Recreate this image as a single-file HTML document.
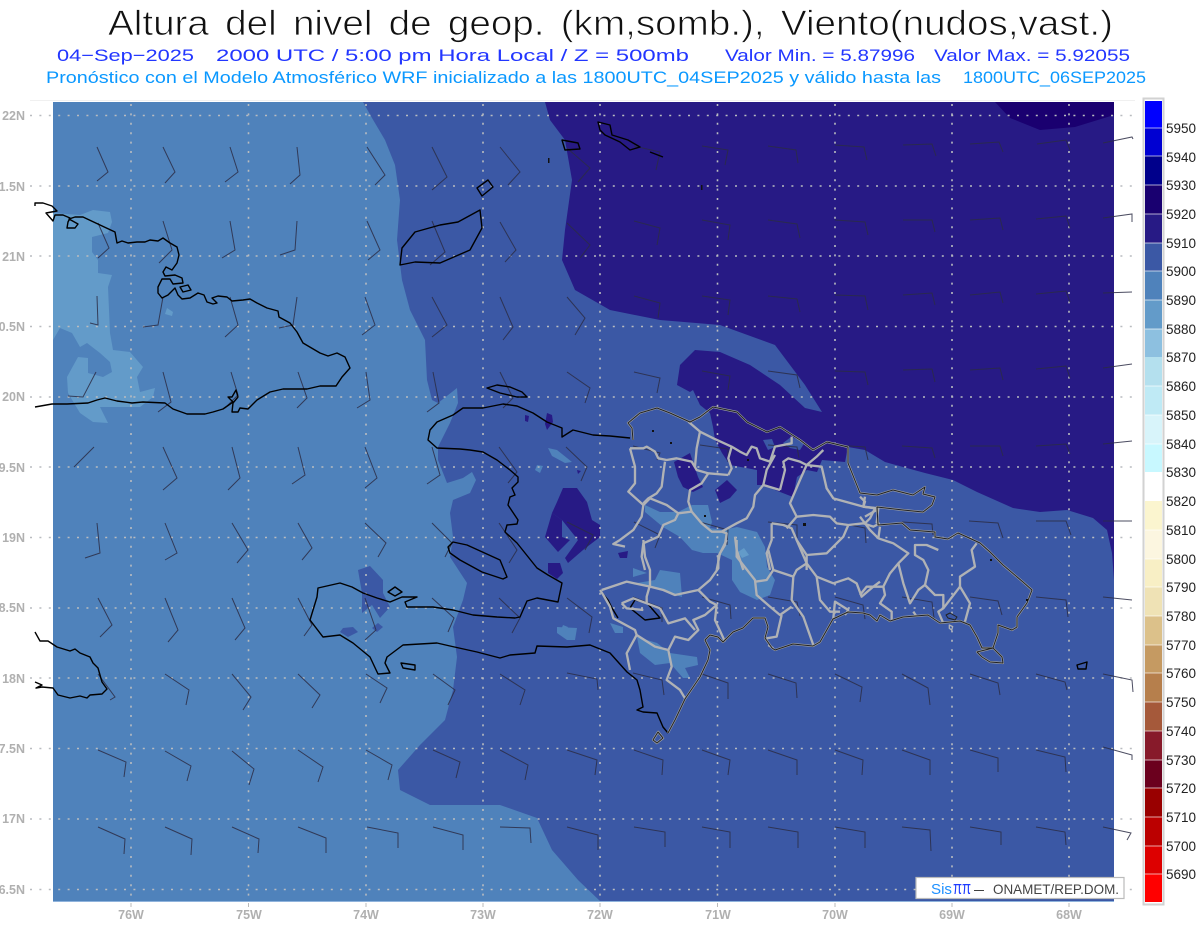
<!DOCTYPE html>
<html><head><meta charset="utf-8"><title>Altura del nivel de geop.</title>
<style>
html,body{margin:0;padding:0;background:#fff;width:1200px;height:927px;overflow:hidden}
svg{display:block;font-family:"Liberation Sans",sans-serif}
</style></head><body>
<svg width="1200" height="927" viewBox="0 0 1200 927" xmlns="http://www.w3.org/2000/svg">
<rect width="1200" height="927" fill="#fff"/>
<text x="108" y="35" font-size="35" fill="#111" stroke="#fff" stroke-width=".8" word-spacing="5" textLength="1005" lengthAdjust="spacingAndGlyphs">Altura del nivel de geop. (km,somb.), Viento(nudos,vast.)</text>
<g font-size="17" fill="#2236ff">
<text x="57" y="61" textLength="137" lengthAdjust="spacingAndGlyphs">04−Sep−2025</text>
<text x="216" y="61" textLength="473" lengthAdjust="spacingAndGlyphs">2000 UTC / 5:00 pm Hora Local / Z = 500mb</text>
<text x="725" y="61" textLength="190" lengthAdjust="spacingAndGlyphs">Valor Min. = 5.87996</text>
<text x="934" y="61" textLength="196" lengthAdjust="spacingAndGlyphs">Valor Max. = 5.92055</text>
</g>
<g font-size="17" fill="#0a98ff">
<text x="46" y="83" textLength="895" lengthAdjust="spacingAndGlyphs">Pronóstico con el Modelo Atmosférico WRF inicializado a las 1800UTC_04SEP2025 y válido hasta las</text>
<text x="963" y="83" textLength="183" lengthAdjust="spacingAndGlyphs">1800UTC_06SEP2025</text>
</g>
<line x1="30" y1="100.5" x2="1135" y2="100.5" stroke="#f0f0f0"/>
<clipPath id="m"><rect x="53" y="102" width="1061" height="799"/></clipPath>
<g clip-path="url(#m)">
<rect x="53" y="102" width="1061" height="799" fill="#4f82bb"/>
<path fill="#639bc9" d="M53 213L80 215 93 210 110 212 112 222 108 233 92 237 92 252 98 260 98 273 112 275 108 287 110 333 113 350 130 352 143 367 137 377 140 392 155 388 153 397 140 407 120 407 100 407 108 423 93 422 80 413 68 393 67 377 78 357 88 358 88 373 103 377 112 372 110 362 100 353 87 343 80 347 72 333 60 328 53 340Z"/>
<path fill="#639bc9" d="M167 308L173 312 172 316 165 314Z"/>
<path fill="#3b58a5" d="M363 102L372 118 385 140 395 165 400 200 397 240 402 280 410 310 425 340 427 380 432 400 438 403 457 388 458 403 450 423 438 447 438 460 447 483 463 478 472 472 476 480 470 493 453 500 450 513 453 537 450 557 467 583 463 600 453 627 457 657 453 690 445 720 420 745 398 770 400 790 430 805 500 805 537 818 552 850 578 880 600 901 1114 901 1114 102Z"/>
<g fill="#3b58a5">
<path d="M358 570L370 566 383 580 383 593 390 607 380 618 372 605 362 613 362 593Z"/>
<path d="M343 628L353 627 358 632 348 637 340 632Z"/>
<path d="M378 623L383 627 377 632 372 628Z"/>
</g>
<g fill="#4f82bb">
<path d="M548 448L557 450 572 462 565 463 552 456Z"/>
<path d="M557 627L577 628 575 640 567 640 557 633Z"/>
<path d="M537 465L543 466 540 473 535 470Z"/>
<path d="M563 625L568 627 565 632 561 630Z"/>
<path d="M645 505L660 512 678 512 692 505 708 505 712 522 710 528 723 530 737 527 757 532 765 547 767 567 775 580 770 595 757 600 740 592 732 580 732 560 717 553 703 553 692 550 680 537 663 527 645 512Z"/>
<path d="M660 570L680 573 682 597 660 590 637 583 655 580Z"/>
<path d="M633 568L647 573 633 577Z"/>
<path d="M637 637L657 643 670 653 697 657 698 665 685 668 690 678 683 678 670 663 655 665 640 653Z"/>
<path d="M610 623L623 627 623 633 615 633Z"/>
</g>
<path fill="#639bc9" d="M738 552L744 548 749 555 742 558Z"/>
<path fill="#271a85" d="M545 102L550 120 565 140 572 180 565 230 562 260 575 290 610 310 660 320 720 325 775 345 805 385 822 412 805 408 780 385 750 365 720 352 695 350 680 365 677 385 690 392 693 390 700 405 710 413 713 427 715 440 722 453 730 465 757 470 757 485 767 485 775 490 793 497 797 477 807 470 817 472 822 460 845 462 848 447 865 450 885 462 925 473 953 480 977 492 1013 508 1040 512 1067 510 1093 518 1107 530 1112 553 1114 580 1114 102Z"/>
<g fill="#3b58a5">
<path d="M763 440L772 439 775 447 768 450Z"/>
<path d="M783 443L791 437 805 442 800 450 790 448Z"/>
</g>
<path fill="#1a0070" d="M995 102L1010 118 1040 130 1075 127 1114 115 1114 102Z"/>
<g fill="#271a85">
<path d="M674 462L690 453 698 477 703 487 693 492 683 487 678 477Z"/>
<path d="M715 490L727 480 737 490 730 498 720 503Z"/>
<path d="M557 502L563 488 577 488 587 502 592 520 600 525 600 537 583 550 568 563 565 558 578 540 570 530 562 520 552 513Z"/>
<path d="M552 513L562 520 562 537 570 540 558 552 545 537 547 530Z"/>
<path d="M548 563L560 563 563 573 557 579 548 573Z"/>
<path d="M547 413L552 415 553 422 547 430 545 424Z"/>
<path d="M525 415L529 416 528 422 525 421Z"/>
<path d="M577 470L581 471 578 474Z"/>
<path d="M618 553L628 551 627 558 620 558Z"/>
</g>
</g>
<g fill="none" stroke="#b9bcc0" stroke-width="1.6" stroke-dasharray="2 7.4">
<path d="M30 115.5H1134M30 186H1134M30 256H1134M30 326.5H1134M30 397H1134M30 467H1134M30 537.5H1134M30 608H1134M30 678H1134M30 748.5H1134M30 819H1134M30 889.5H1134"/>
<path d="M131 104V897M248.5 104V897M366 104V897M483 104V897M600 104V897M717.5 104V897M835 104V897M952 104V897M1069 104V897"/>
</g>
<path d="M131 903v4M248.5 903v4M366 903v4M483 903v4M600 903v4M717.5 903v4M835 903v4M952 903v4M1069 903v4" stroke="#bbb"/>
<line x1="53" y1="901.5" x2="1114" y2="901.5" stroke="#8fb3dc"/>
<path fill="none" stroke="#2b2d45" stroke-opacity=".85" stroke-width="1" d="M97 147L108 172 97 181M163 147L175 172 165 183M230 147L238 172 225 182M297 147L300 175 290 184M367 147L385 175 375 185M432 147L447 177 432 190M500 147L520 172 508 185M567 148L590 168 578 182M634 146L660 152 656 170M702 146L728 150 725 165M768 146L796 150 798 163M835 145L864 147 867 160M903 145L932 144 936 156M970 144L999 142 1003 152M1037 144L1066 140 1070 150M1103 143L1132 137 1133 139
M98 223L109 248 98 258M163 221L172 250 159 263M230 221L235 250 222 258M297 221L295 250 280 255M367 221L380 250 368 260M432 221L445 252 430 265M500 222L516 250 505 262M567 223L590 245 580 258M634 221L660 228 657 245M702 220L730 225 728 240M768 220L797 224 800 238M835 220L865 222 868 235M903 220L932 220 935 232M970 220L1000 218 1003 230M1036 219L1066 216 1070 228M1103 218L1132 214 1132 222
M97 296L98 325 90 323M163 297L158 325 143 327M230 297L238 325 225 337M297 297L293 325 279 328M365 297L375 325 362 335M432 297L447 325 432 337M500 297L513 327 503 340M567 297L585 318 575 335M634 296L660 303 658 318M702 296L730 300 728 315M768 296L797 299 800 312M835 295L865 296 868 310M903 295L932 293 935 305M970 295L1000 292 1003 303M1036 294L1066 291 1070 302M1103 293L1132 292
M96 372L83 397 68 396M163 372L171 402 158 412M231 372L238 395 225 408M298 372L307 398 297 408M366 372L370 400 357 408M433 372L439 403 427 412M500 372L513 398 503 408M567 372L590 388 585 403M634 372L660 378 657 393M702 371L730 376 728 390M768 371L797 375 800 388M835 371L865 372 868 385M903 370L932 369 935 382M970 370L1000 368 1003 380M1036 369L1066 366 1070 378M1103 368L1132 364
M94 447L74 467M163 447L177 478 163 490M232 447L240 478 228 490M298 447L305 475 292 484M365 447L377 478 365 488M432 447L440 475 427 484M499 447L517 472 508 483M566 447L587 467 581 481M633 446L660 453 657 460M700 445L728 449 728 462M768 445L797 447 799 458M835 445L865 447 868 460M902 446L932 448 935 458M970 446L1000 446 1003 456M1036 446L1066 444 1070 454M1103 444L1132 441
M97 523L100 553 85 558M165 523L177 553 165 560M232 523L248 550 237 563M298 523L312 548 302 560M365 523L386 543 378 557M432 523L452 543 445 557M499 523L517 550 509 563M567 522L593 535 585 550M634 522L660 535 655 548M700 522L728 530 727 545M768 522L797 525 797 538M835 522L865 528 866 543M902 522L932 524 933 535M969 521L998 523 1003 538M1036 521L1066 521 1071 535M1103 521L1132 521
M98 598L112 625 100 637M165 598L178 630 168 642M232 598L245 628 235 640M298 598L312 625 304 636M365 598L376 630 365 640M432 598L454 618 448 632M499 598L520 618 512 633M567 598L592 617 589 633M633 597L662 608 662 622M702 597L730 605 731 619M768 597L797 602 800 616M835 597L863 605 865 619M902 597L932 602 934 618M970 597L998 601 1002 615M1036 597L1066 600 1068 617M1103 597L1132 600
M98 674L115 697 110 700M165 674L189 690 186 705M232 674L251 697 243 710M298 674L320 695 312 708M366 674L387 688 380 703M433 674L455 690 448 705M500 674L525 690 520 705M567 673L597 679 598 690M633 673L662 680 664 695M702 674L728 683 728 699M768 674L796 683 797 698M835 674L862 687 860 702M902 674L928 688 930 705M970 674L998 683 1000 695M1036 674L1065 682 1067 690M1103 674L1132 680 1133 692
M98 750L126 762 124 777M165 751L191 766 187 781M232 751L254 769 249 785M298 750L323 767 318 782M366 750L392 765 388 780M433 750L460 762 456 778M500 750L528 765 525 780M567 750L597 760 595 775M634 750L663 760 662 775M702 750L730 760 728 775M768 750L797 760 797 775M835 750L863 760 862 775M902 750L930 760 930 775M970 750L998 758 998 772M1036 750L1065 757 1066 772M1103 747L1132 755 1132 760
M98 827L125 839 124 854M165 827L192 839 191 855M232 827L259 839 258 853M298 827L326 838 326 853M367 827L398 833 398 848M433 827L463 835 463 850M500 827L530 828 531 843M567 827L598 835 598 850M634 827L665 832 665 847M702 827L730 832 730 848M768 827L798 832 798 848M835 827L865 832 865 848M902 827L930 830 931 851M970 827L1001 832 1001 845M1036 827L1065 832 1066 845M1103 827L1131 833 1127 840"/>
<g fill="none" stroke="#000" stroke-width="1.4" stroke-linejoin="round">
<path d="M35 206L35 203 43 203 52 206 57 211 46 213 53 221 55 215 63 215 70 218 68 222 67 228 75 228 78 224 69 219 75 217 83 217 100 225 115 232 117 243 122 241 128 243 137 242 145 242 150 240 158 241 163 238 170 243 177 247 179 255 177 263 172 270 166 267 163 272 165 276 175 275 182 278 183 283 173 284 170 279 162 279 158 287 158 293 162 298 168 295 175 288 178 295 182 299 190 298 198 293 204 295 207 302 213 304 217 303 212 298 218 296 227 297 232 301 243 300 250 299 257 303 267 308 278 311 279 317 290 323 297 332 303 343 320 353 328 356 337 353 345 357 350 368 342 377 336 386 320 386 307 389 283 389 270 392 257 400 248 409 240 408 238 412 232 412 233 403 238 397 236 390 232 397 228 397 233 402 223 409 213 412 205 414 187 414 173 409 165 403 143 402 132 403 117 401 105 398 97 400 88 403 67 404 52 404 35 407"/>
<path d="M180 287L188 285 191 290 183 292Z"/>
<path d="M35 632L40 641 48 641 57 647 70 651 75 649 80 653 90 657 93 663 98 668 102 682 107 689 102 694 90 695 87 698 80 696 70 698 58 695 53 688 42 687 36 688 42 685 35 682"/>
<path d="M402 248L415 232 440 225 458 222 480 210 482 228 470 250 440 263 415 262 400 265Z"/>
<path d="M477 188L488 180 493 187 482 196Z"/>
<path d="M598 122L610 125 612 135 628 140 640 147 630 150 620 142 605 135 600 130Z"/>
<path d="M562 140L578 143 580 149 565 150Z"/>
<path d="M650 152L663 157"/>
<path d="M487 388L497 385 510 387 522 392 527 397 517 397 500 393Z"/>
<path d="M630 438L610 436 593 435 573 430 562 437 562 428 547 422 533 413 517 406 503 404 483 408 463 408 453 415 437 422 430 430 428 440 437 448 460 449 470 450 483 452 497 460 510 470 518 477 518 482 512 488 515 495 510 497 508 505 518 520 517 524 507 525 505 532 517 543 537 568 548 575 562 583 558 602 537 598 527 601 520 617 515 618 497 617 473 615 453 610 433 607 407 607 405 602 417 597 402 597 390 602 377 598 363 593 352 587 340 583 318 588 317 597 310 620 323 637 340 635 353 643 370 657 378 674 390 673 385 663 387 657 403 645 437 643 450 646 477 652 500 658 510 655 535 653 537 646 567 647 590 645 610 653 627 672 637 680 640 690 643 707 637 710 643 712 657 713 663 727 668 733"/>
<path d="M448 547L453 542 467 545 500 560 507 577 503 579 482 572 460 560 450 553Z"/>
<path d="M401 663L415 665 415 670 403 668Z"/>
<path d="M388 592L395 587 402 592 395 596Z"/>
<path d="M1077 665L1087 662 1086 669 1078 669Z"/>
<path d="M600 590L608 600 612 608 618 618"/>
<path d="M630 608L635 600 647 603 660 618 645 620Z"/>
</g>
<g fill="none" stroke="#b0b2b5" stroke-width="7" stroke-linejoin="round" transform="translate(600 390) scale(.3333)">
<path d="M90 175L130 175 140 170 165 185 175 205 200 210 230 205 275 215 290 240 325 250 385 255"/>
<path d="M300 125L290 175 285 230"/>
<path d="M265 95L300 125 340 145 395 170 420 185 440 195 455 170 470 175 480 205 510 215 525 170 575 160 575 140"/>
<path d="M395 170L385 205 395 235 385 255"/>
<path d="M325 250L305 280 270 300 265 335 275 365 305 400 335 425 365 425"/>
<path d="M195 215L190 250 185 290 170 310 145 325 130 340"/>
<path d="M90 175L105 230 105 280 85 305 130 345 125 380 100 420 60 450 40 462 75 470"/>
<path d="M130 345L150 325 200 345 235 370 275 365"/>
<path d="M235 370L225 390 190 405 175 440 130 460 125 500 135 540"/>
<path d="M365 425L410 400 440 385 460 350 465 315 490 285 540 300"/>
<path d="M525 195L500 240 490 285"/>
<path d="M540 300L555 240 550 215 565 205 600 215 620 225 650 200 670 180"/>
<path d="M620 225L600 270 570 340 590 380 560 415"/>
<path d="M620 225L665 230 680 295 700 325 790 350 835 355 830 400"/>
<path d="M790 350L795 320"/>
<path d="M795 380L830 360"/>
<path d="M590 380L640 375 690 380 710 400 745 405 790 400 820 410 840 400"/>
<path d="M515 400L550 405 575 415 590 450 620 495 620 540"/>
<path d="M515 400L515 450 500 490 510 540"/>
<path d="M745 405L730 440 680 490 620 495"/>
<path d="M365 425L380 430 375 465 360 490 350 540"/>
<path d="M405 440L410 480 430 540"/>
</g>
<g fill="none" stroke="#b0b2b5" stroke-width="7" stroke-linejoin="round" transform="translate(600 540) scale(.3333)">
<path d="M380 0L355 50 355 85 330 120 295 150 225 165 190 150 150 140 80 125 5 150"/>
<path d="M130 0L135 50 150 90 150 135 140 170 140 190"/>
<path d="M410 0L410 50 465 120 470 165 510 200 540 225 575 200"/>
<path d="M505 30L520 90 580 110 590 90 620 70"/>
<path d="M620 70L590 0"/>
<path d="M620 70L650 110 700 130 745 115 770 130 785 170 820 140 840 125"/>
<path d="M580 110L575 180 610 230 640 315"/>
<path d="M650 110L660 180 690 215 720 215"/>
<path d="M520 90L500 120 465 125"/>
<path d="M295 150L330 185 350 195 345 240 375 305"/>
<path d="M350 195L315 225 280 240 295 270 265 300 225 290 205 330 215 380 200 420 240 450 255 475"/>
<path d="M205 330L165 320 110 285 80 340 90 390"/>
<path d="M110 285L105 270 40 235 30 200 10 165 0 150"/>
<path d="M180 205L205 250 255 235 285 270"/>
<path d="M65 190L100 175 140 190 180 205"/>
<path d="M65 190L80 205 130 210"/>
<path d="M545 225L530 290 500 295"/>
<path d="M700 235L705 185 745 210 735 225"/>
<path d="M505 315L520 325"/>
<path d="M160 600L175 575 190 595 170 610Z" stroke-width="5"/>
</g>
<g fill="none" stroke="#b0b2b5" stroke-width="7" stroke-linejoin="round" transform="translate(860 480) scale(.3333)">
<path d="M0 50L15 65 10 80 45 85 30 115 15 130 30 150 55 175 100 190 145 220 115 250 90 280 70 320 20 320 0 345"/>
<path d="M70 320L75 345 60 370 95 395 95 420"/>
<path d="M115 250L130 310 150 370 175 330 195 315 205 270 190 240 165 225 165 195 200 195 235 210"/>
<path d="M195 315L225 345 250 345 250 385 235 395 250 430"/>
<path d="M250 385L300 320 330 370 315 425"/>
<path d="M300 320L300 290 345 260 335 210 350 190"/>
<path d="M0 110L15 130"/>
<path d="M60 140L55 175"/>
<path d="M160 395L170 410"/>
<path d="M268 435L278 440 275 450 268 445Z" stroke-width="4"/>
</g>
<g fill="none" stroke="#9ea2a8" stroke-width="2.2" stroke-linejoin="round">
<path d="M668 733L675 720 685 699 700 677 708 660 710 650 705 640 710 635 718 637 723 642 733 632 743 628 753 618 765 618 768 627 765 638 772 648 775 650 793 644 813 646 820 642 833 619 848 612 863 613 870 615 877 621 880 615 890 621 903 617 928 615 940 623 960 621 970 625 977 637 982 648 993 648 998 633 998 625 1012 630 1017 627 1017 617 1027 603 1032 590 1023 582 1003 565 990 552 980 543 967 537 958 533 948 539 935 537 935 532 910 530 902 523 878 525 877 507 903 510 923 512 932 505 935 497 923 494 925 487 913 495 893 490 877 495 860 493 848 463 848 447 827 442 813 450 800 440 780 427 767 432 747 422 737 412 713 407 700 417 690 422 670 413 657 408 640 413 628 423 632 428 633 440"/>
<path d="M977 652L993 648 1002 657 1003 663 990 662 982 657Z"/>
<path d="M653 740L658 732 663 738 657 743Z"/>
</g>
<g fill="none" stroke="#222" stroke-width="1" stroke-linejoin="round">
<path d="M668 733L675 720 685 699 700 677 708 660 710 650 705 640 710 635 718 637 723 642 733 632 743 628 753 618 765 618 768 627 765 638 772 648 775 650 793 644 813 646 820 642 833 619 848 612 863 613 870 615 877 621 880 615 890 621 903 617 928 615 940 623 960 621 970 625 977 637 982 648 993 648 998 633 998 625 1012 630 1017 627 1017 617 1027 603 1032 590 1023 582 1003 565 990 552 980 543 967 537 958 533 948 539 935 537 935 532 910 530 902 523 878 525 877 507 903 510 923 512 932 505 935 497 923 494 925 487 913 495 893 490 877 495 860 493 848 463 848 447 827 442 813 450 800 440 780 427 767 432 747 422 737 412 713 407 700 417 690 422 670 413 657 408 640 413 628 423 632 428 633 440"/>
<path d="M977 652L993 648 1002 657 1003 663 990 662 982 657Z"/>
<path d="M653 740L658 732 663 738 657 743Z"/>
<path d="M946 615L950 613 957 617 955 620 948 618Z"/>
</g>
<g fill="#111">
<rect x="990" y="559" width="2" height="2"/><rect x="1026" y="599" width="2" height="2"/><rect x="652" y="430" width="2" height="2"/><rect x="670" y="442" width="2" height="2"/><rect x="747" y="459" width="2" height="2"/><rect x="803" y="523" width="3" height="3"/><rect x="704" y="515" width="2" height="2"/><rect x="548" y="158" width="1.5" height="5"/><rect x="701" y="185" width="1.5" height="5"/>
</g>
<g font-size="12.5" font-weight="bold" fill="#b0b0b0" text-anchor="end">
<text x="25" y="120">22N</text><text x="25" y="191">1.5N</text><text x="25" y="261">21N</text><text x="25" y="331">0.5N</text><text x="25" y="401">20N</text><text x="25" y="472">9.5N</text><text x="25" y="542">19N</text><text x="25" y="612">8.5N</text><text x="25" y="683">18N</text><text x="25" y="753">7.5N</text><text x="25" y="823">17N</text><text x="25" y="894">6.5N</text>
</g>
<g font-size="12.5" font-weight="bold" fill="#b0b0b0" text-anchor="middle">
<text x="131" y="919">76W</text><text x="249" y="919">75W</text><text x="366" y="919">74W</text><text x="483" y="919">73W</text><text x="600" y="919">72W</text><text x="718" y="919">71W</text><text x="835" y="919">70W</text><text x="952" y="919">69W</text><text x="1069" y="919">68W</text>
</g>
<rect x="1143.5" y="98.5" width="20" height="806" fill="#fff" stroke="#d2d2d2" stroke-width="2"/>
<rect x="1145" y="101" width="17" height="27" fill="#0000ff"/>
<rect x="1145" y="128" width="17" height="28" fill="#0000d2"/>
<rect x="1145" y="156" width="17" height="29" fill="#00008b"/>
<rect x="1145" y="185" width="17" height="29" fill="#190070"/>
<rect x="1145" y="214" width="17" height="29" fill="#271a85"/>
<rect x="1145" y="243" width="17" height="28" fill="#3b58a5"/>
<rect x="1145" y="271" width="17" height="29" fill="#4f82bb"/>
<rect x="1145" y="300" width="17" height="29" fill="#639bc9"/>
<rect x="1145" y="329" width="17" height="28" fill="#8dc0e0"/>
<rect x="1145" y="357" width="17" height="29" fill="#b4e0ee"/>
<rect x="1145" y="386" width="17" height="29" fill="#bfeaf5"/>
<rect x="1145" y="415" width="17" height="29" fill="#d8f4fa"/>
<rect x="1145" y="444" width="17" height="28" fill="#c8f8ff"/>
<rect x="1145" y="472" width="17" height="29" fill="#ffffff"/>
<rect x="1145" y="501" width="17" height="29" fill="#fbf5cf"/>
<rect x="1145" y="530" width="17" height="29" fill="#fcf6e0"/>
<rect x="1145" y="559" width="17" height="28" fill="#f8efc5"/>
<rect x="1145" y="587" width="17" height="29" fill="#efe2b5"/>
<rect x="1145" y="616" width="17" height="29" fill="#dcc18a"/>
<rect x="1145" y="645" width="17" height="28" fill="#c59a62"/>
<rect x="1145" y="673" width="17" height="29" fill="#b67f4c"/>
<rect x="1145" y="702" width="17" height="29" fill="#a5593a"/>
<rect x="1145" y="731" width="17" height="29" fill="#871a2a"/>
<rect x="1145" y="760" width="17" height="28" fill="#6b001e"/>
<rect x="1145" y="788" width="17" height="29" fill="#990000"/>
<rect x="1145" y="817" width="17" height="29" fill="#bb0000"/>
<rect x="1145" y="846" width="17" height="28" fill="#dd0000"/>
<rect x="1145" y="874" width="17" height="28" fill="#ff0000"/>
<path stroke="#fff" stroke-opacity=".65" d="M1145 128H1162M1145 156H1162M1145 185H1162M1145 214H1162M1145 243H1162M1145 271H1162M1145 300H1162M1145 329H1162M1145 386H1162M1145 415H1162M1145 444H1162M1145 530H1162M1145 559H1162M1145 587H1162M1145 616H1162M1145 645H1162M1145 673H1162M1145 702H1162M1145 731H1162M1145 760H1162M1145 788H1162M1145 817H1162M1145 846H1162M1145 874H1162"/>
<g font-size="13.5" fill="#222">
<text x="1166" y="133">5950</text><text x="1166" y="162">5940</text><text x="1166" y="190">5930</text><text x="1166" y="219">5920</text><text x="1166" y="248">5910</text><text x="1166" y="276">5900</text><text x="1166" y="305">5890</text><text x="1166" y="334">5880</text><text x="1166" y="362">5870</text><text x="1166" y="391">5860</text><text x="1166" y="420">5850</text><text x="1166" y="449">5840</text><text x="1166" y="477">5830</text><text x="1166" y="506">5820</text><text x="1166" y="535">5810</text><text x="1166" y="564">5800</text><text x="1166" y="592">5790</text><text x="1166" y="621">5780</text><text x="1166" y="650">5770</text><text x="1166" y="678">5760</text><text x="1166" y="707">5750</text><text x="1166" y="736">5740</text><text x="1166" y="765">5730</text><text x="1166" y="793">5720</text><text x="1166" y="822">5710</text><text x="1166" y="851">5700</text><text x="1166" y="879">5690</text>
</g>
<rect x="916" y="877.5" width="208" height="21" fill="#fff" stroke="#bbb" stroke-width="1.2"/>
<g font-size="14">
<text x="931" y="894" font-size="15" fill="#1e90ff" textLength="21" lengthAdjust="spacingAndGlyphs">Sis</text>
<text x="953" y="894" fill="#1e3cff" font-size="18" textLength="18" lengthAdjust="spacingAndGlyphs">ππ</text>
<text x="974" y="894" fill="#333" textLength="10" lengthAdjust="spacingAndGlyphs">–</text>
<text x="993" y="894" fill="#444" textLength="126" lengthAdjust="spacingAndGlyphs">ONAMET/REP.DOM.</text>
</g>
</svg>
</body></html>
